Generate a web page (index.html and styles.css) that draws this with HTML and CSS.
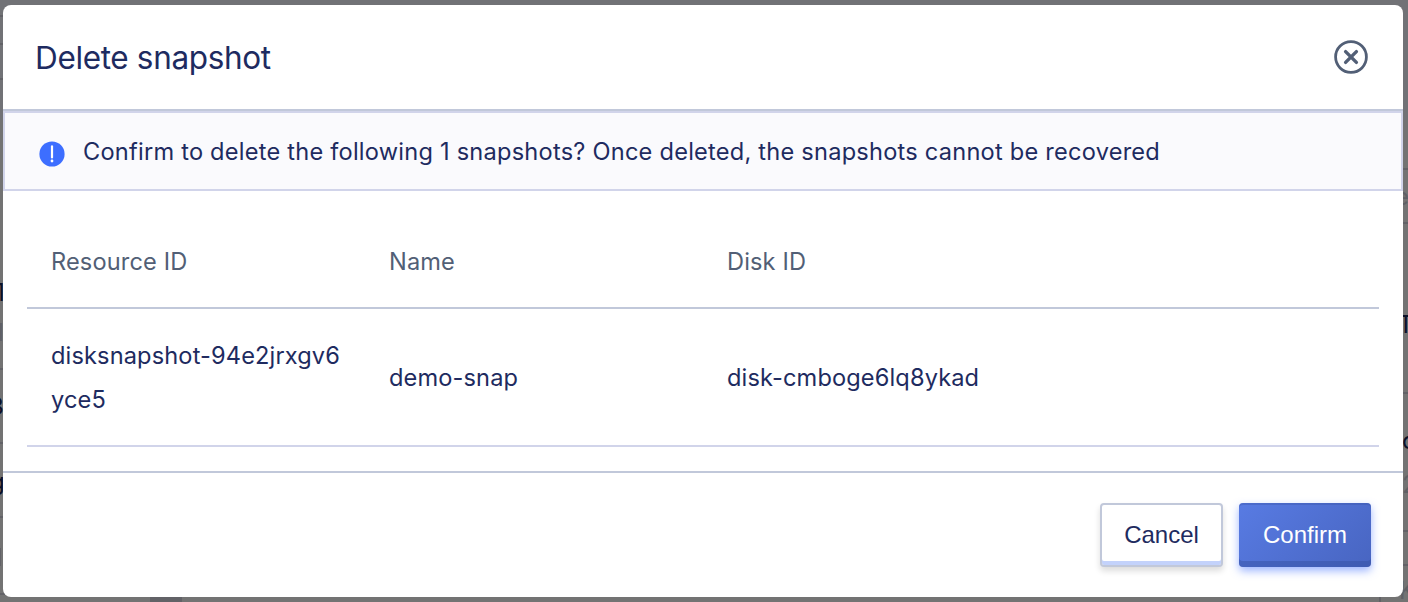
FILE: index.html
```html
<!DOCTYPE html>
<html lang="en">
<head>
<meta charset="utf-8">
<title>Delete snapshot</title>
<link rel="stylesheet" href="styles.css">
</head>
<body>
<svg class="backdrop" width="1408" height="602" aria-hidden="true">
  <rect width="1408" height="120" fill="#717276"/>
  <g fill="#626267">
    <rect y="15" width="3" height="2"/><rect y="43" width="3" height="2"/><rect y="78" width="3" height="2"/>
    <rect y="368" width="3" height="2"/><rect y="442" width="3" height="2"/><rect y="516" width="3" height="2"/><rect y="593" width="5" height="2"/>
    <rect y="548" width="1" height="18"/><rect x="150" y="597" width="32" height="5"/>
    <rect x="1403" y="168" width="5" height="2"/><rect x="1403" y="222" width="5" height="2"/><rect x="1403" y="392" width="5" height="2"/>
    <rect x="1403" y="530" width="5" height="2"/><rect x="1403" y="564" width="5" height="2"/><rect x="1379" y="597" width="2" height="5"/>
  </g>
  <g class="backdrop-text">
    <text x="-5" y="301">1</text><text x="-11" y="415">3</text><text x="-10" y="490">g</text>
    <text x="1398" y="333">T</text><text x="1402" y="449">o</text>
    <g class="faint"><text x="-11" y="341">d</text><text x="1395" y="205">e</text><text x="1402" y="493">2</text><text x="1399" y="599">K</text></g>
  </g>
</svg>
<main class="dialog" role="dialog" aria-labelledby="title">
  <header class="header">
    <h1 class="title" id="title">Delete snapshot</h1>
    <button class="close" aria-label="Close">
      <svg width="34" height="34" viewBox="0 0 34 34" fill="none" stroke="#525f76">
        <circle cx="17" cy="17" r="15.4" stroke-width="2.8"/>
        <path d="M11.6 11.6 22.4 22.4M22.4 11.6 11.6 22.4" stroke-width="3.4" stroke-linecap="round"/>
      </svg>
    </button>
  </header>
  <div class="notice">
    <svg class="notice-icon" width="26" height="26" viewBox="0 0 26 26">
      <circle cx="13" cy="13" r="12.6" fill="#3d6eff"/>
      <path d="M13 5.4V16.4" stroke="#fff" stroke-width="2.2" stroke-linecap="round"/>
      <circle cx="13" cy="20" r="1.4" fill="#fff"/>
    </svg>
    <p class="notice-text">Confirm to delete the following 1 snapshots? Once deleted, the snapshots cannot be recovered</p>
  </div>
  <section class="table">
    <div class="row head"><span>Resource ID</span><span>Name</span><span>Disk ID</span></div>
    <div class="row body"><span>disksnapshot-94e2jrxgv6<br>yce5</span><span>demo-snap</span><span>disk-cmboge6lq8ykad</span></div>
  </section>
  <footer class="footer">
    <button class="button cancel">Cancel</button>
    <button class="button confirm">Confirm</button>
  </footer>
</main>
</body>
</html>
```

FILE: styles.css
```css
* { box-sizing: border-box; }
body { margin: 0; padding: 5px 5px 5px 3px; height: 602px; overflow: hidden; background: #737373; color: #1e2b60; font-family: Inter, "Liberation Sans", sans-serif; }
.backdrop { position: absolute; left: 0; top: 0; }
.backdrop-text { font-size: 24px; fill: #0b1028; }
.faint { fill: #5f6065; }
.dialog { position: relative; width: 1400px; height: 592px; background: #fff; border-radius: 8px; overflow: hidden; }
.header { height: 106px; padding: 0 35px 0 32px; display: flex; align-items: center; justify-content: space-between; border-bottom: 2px solid #c1c8da; }
.title { margin: 0; padding-top: 2px; font-size: 31.5px; line-height: 40px; font-weight: 400; letter-spacing: -.35px; }
.close { display: flex; padding: 0; border: 0; background: none; }
.notice { height: 80px; padding: 2px 34px 0; display: flex; align-items: center; border: 2px solid #d1d4ea; background: #fafafd; }
.notice-icon { margin: 4px 18px 0 0; flex: none; }
.notice-text { margin: 0; font-size: 23.6px; line-height: 40px; letter-spacing: .23px; white-space: nowrap; }
.table { margin: 24px 24px 0; font-size: 23.6px; line-height: 44px; letter-spacing: .13px; }
.row { display: grid; grid-template-columns: repeat(4, 338px); align-items: center; padding: 2px 0 0 24px; }
.head { height: 94px; color: #525f76; border-bottom: 2px solid #c1c8da; }
.body { height: 138px; border-bottom: 2px solid #d1d4ea; }
.footer { margin-top: 24px; height: 126px; padding: 30px 32px 0; display: flex; justify-content: flex-end; gap: 16px; border-top: 2px solid #c1c8da; }
.button { height: 64px; padding: 0; font: 24px/60px "Liberation Sans", Arial, sans-serif; border-radius: 4px; }
.cancel { width: 123px; color: #1e2b60; background: #fff; border: 2px solid #c1c8da; box-shadow: inset 0 -4px #c3d2fb, 0 4px 6px rgba(0, 0, 0, .14); }
.confirm { width: 132px; color: #fff; border: 0; background: linear-gradient(135deg, #587be3, #4865c1); box-shadow: inset 0 -6px rgba(54, 81, 163, .5), inset 0 2px rgba(54, 81, 163, .35), 0 4px 8px rgba(61, 110, 255, .5); }
```
